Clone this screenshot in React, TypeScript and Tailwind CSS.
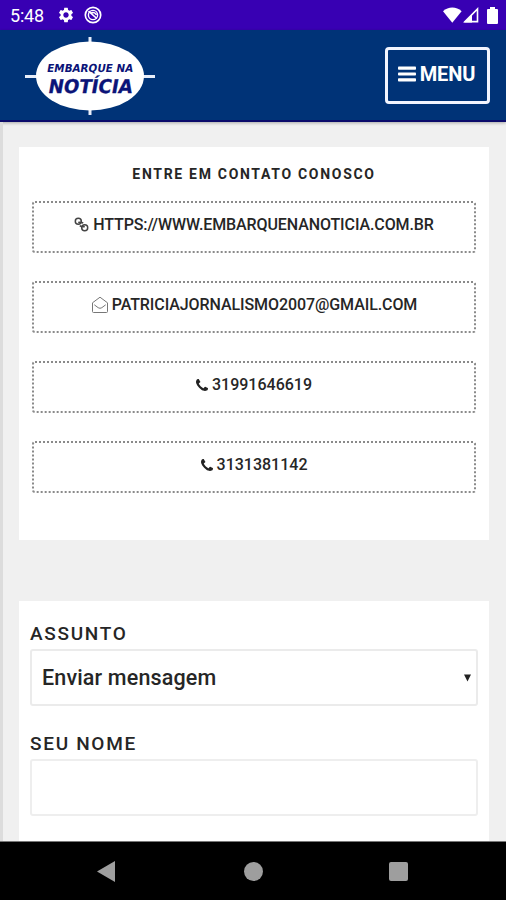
import type { ReactNode } from "react";
import { MdSettings } from "react-icons/md";

function StatusBar() {
  return (
    <div className="flex h-[30px] shrink-0 items-center bg-[#3800b3] pl-[10px] pr-2 text-white">
      <span className="w-[47px] pt-0.5 text-[18px] leading-none tracking-[-0.2px]">5:48</span>
      <MdSettings className="h-[18px] w-[18px]" />
      <svg viewBox="0 0 18 18" className="ml-[9px] h-[18px] w-[18px]" fill="none" stroke="currentColor">
        <circle cx="9" cy="9" r="7.7" strokeWidth="1.7" />
        <circle cx="9" cy="9" r="4.6" strokeWidth="1.4" />
        <path d="M4.5 5.200 12.800 12.500M7 7c2-.8 4.500-.2 5.500 1.800" strokeWidth="1.6" />
      </svg>
      <svg viewBox="0 0 19 17" className="ml-auto h-[17px] w-[19px]" fill="currentColor">
        <path d="M0 4.200C5.300-.6 13.400-.6 18.600 4.200L9.300 15.800Z" />
      </svg>
      <svg viewBox="0 0 16 16" className="ml-px h-4 w-4" fill="none" stroke="currentColor">
        <path d="M2 14.600 14.500 2v12.600Z" strokeWidth="1.600" />
        <path d="M1 15.400 9 7.400v8Z" fill="currentColor" stroke="none" />
      </svg>
      <svg viewBox="0 0 11 17" className="ml-2 h-[17px] w-[11px]" fill="currentColor">
        <path d="M3 0h5v2h2q1 0 1 1v13q0 1-1 1H1q-1 0-1-1V3q0-1 1-1h2Z" />
      </svg>
    </div>
  );
}

function Logo() {
  return (
    <svg viewBox="0 0 130 78" className="h-[78px] w-[130px]">
      <path d="M0 39.500h130M65 0v78" stroke="#e8eefa" strokeWidth="3" />
      <ellipse cx="65" cy="39" rx="54" ry="34.500" fill="#fff" />
      <g fill="#0b1478" fontFamily="'DejaVu Sans', sans-serif" fontWeight="bold">
        <text transform="translate(21.500 35) skewX(-10)" fontSize="11" textLength="86" lengthAdjust="spacingAndGlyphs">
          EMBARQUE NA
        </text>
        <text transform="translate(22.500 56) skewX(-10)" fontSize="19" textLength="84" lengthAdjust="spacingAndGlyphs" stroke="#0b1478" strokeWidth="0.3">
          NOTÍCIA
        </text>
      </g>
    </svg>
  );
}

function LinkIcon() {
  return (
    <svg viewBox="0 0 15 15" className="mr-1 h-[15px] w-[15px]" fill="none" stroke="#444" strokeWidth="1.5">
      <circle cx="4.300" cy="4.300" r="3" />
      <circle cx="10.700" cy="10.700" r="3" />
      <path d="M4.200 5.400q3.300-.6 5 .8M5.800 8.600q1.700 1.500 5 .9" />
    </svg>
  );
}

function MailIcon() {
  return (
    <svg viewBox="0 0 18 18" className="mr-[3px] h-[18px] w-[18px]" fill="none" stroke="#777" strokeWidth="1">
      <path d="M1.500 6.800 9 1.200l7.500 5.600V15.500q0 1-1 1h-13q-1 0-1-1Z" />
      <path d="m3.300 8.800 3.900 2.900q1.800 1.200 3.600 0l3.900-2.900" />
    </svg>
  );
}

function PhoneIcon() {
  return (
    <svg viewBox="0 0 1408 1408" className="mr-1 h-3 w-3" fill="#222">
      <path d="M1408 1112q0 27-10 70.500t-21 68.500q-21 50-122 106-94 51-186 51-27 0-52.500-3.500t-57.500-12.500-47.500-14.500-55.500-20.500-49-18q-98-35-175-83-128-79-264.500-215.500t-215.500-264.500q-48-77-83-175-3-9-18-49t-20.500-55.500-14.500-47.500-12.500-57.500-3.500-52.500q0-92 51-186 56-101 106-122 25-11 68.500-21t70.500-10q14 0 21 3 18 6 53 76 11 19 30 54t35 63.500 31 53.500q3 4 17.500 25t21.500 35.500 7 28.500q0 20-28.500 50t-62 55-62 53-28.500 46q0 9 5 22.500t8.500 20.500 14 24 11.500 19q76 137 174 235t235 174q2 1 19 11.500t24 14 20.500 8.500 22.500 5q18 0 46-28.500t53-62 55-62 50-28.500q14 0 28.500 7t35.500 21.500 25 17.500q25 15 53.500 31t63.500 35 54 30q70 35 76 53 3 7 3 21z" />
    </svg>
  );
}

const contatos: { icone: ReactNode; texto: string; espaco: string }[] = [
  { icone: <LinkIcon />, texto: "https://www.embarquenanoticia.com.br", espaco: "tracking-[-0.1px]" },
  { icone: <MailIcon />, texto: "patriciajornalismo2007@gmail.com", espaco: "tracking-[-0.08px]" },
  { icone: <PhoneIcon />, texto: "31991646619", espaco: "tracking-[0px]" },
  { icone: <PhoneIcon />, texto: "3131381142", espaco: "tracking-[0px]" },
];

export default function App() {
  return (
    <div className="flex h-[900px] w-[506px] flex-col overflow-hidden bg-[#f0f0f0] font-['Roboto',sans-serif] text-[#262626]">
      <StatusBar />
      <header className="flex h-[92px] shrink-0 items-start justify-between border-b-2 border-[#0b0b6b] bg-[#003377] pl-[25px] pr-4 shadow-[0_1px_3px_rgba(0,0,0,0.3)]">
        <div className="pt-[7px]">
          <Logo />
        </div>
        <button className="mt-[17px] flex h-[57px] w-[105px] items-center justify-center gap-1 rounded-[4px] border-[3px] border-[#f2f5ff] pb-1 pr-0.5 text-[20px] font-bold leading-none text-white">
          <svg viewBox="0 0 18 16" className="h-4 w-[18px]" fill="currentColor">
            <rect y="0.500" width="18" height="3.200" rx="0.800" />
            <rect y="6.400" width="18" height="3.200" rx="0.800" />
            <rect y="12.300" width="18" height="3.200" rx="0.800" />
          </svg>
          <span className="tracking-[-0.1px]">MENU</span>
        </button>
      </header>

      <main className="flex min-h-0 grow flex-col gap-[61px] overflow-hidden border-l-[3px] border-[#dcdcdc] pl-[16px] pr-[17px] pt-[25px]">
        <section className="h-[393px] shrink-0 bg-white px-[13px] pt-[18px]">
          <h2 className="text-center text-[14px] font-bold uppercase leading-[18px] tracking-[1.7px]">Entre em contato conosco</h2>
          <div className="mt-[18px] flex flex-col gap-7">
            {contatos.map((c) => (
              <a key={c.texto} className="flex h-[52px] items-center justify-center rounded-[3px] border-2 border-dotted border-[#8a8a8a] pb-[5px] text-base font-medium uppercase whitespace-nowrap">
                {c.icone}
                <span className={c.espaco}>{c.texto}</span>
              </a>
            ))}
          </div>
        </section>

        <section className="h-[260px] shrink-0 bg-white px-[11px] pt-[21px]">
          <label className="block text-[19px] font-medium uppercase leading-6 tracking-[1.7px]">Assunto</label>
          <div className="mt-[3px] flex h-[57px] items-center justify-between rounded-[3px] border-2 border-[#ebebeb] pl-[10px] pr-[5px]">
            <span className="text-[21.5px] font-medium leading-none tracking-[0.15px]">Enviar mensagem</span>
            <svg viewBox="0 0 7 8" className="h-2 w-[7px]">
              <path d="M0 .5h7L3.500 7.500Z" fill="#222" />
            </svg>
          </div>
          <label className="mt-[26px] block text-[19px] font-medium uppercase leading-6 tracking-[1.7px]">Seu nome</label>
          <div className="mt-[3px] h-[57px] rounded-[3px] border-2 border-[#eeeeee]" />
        </section>
      </main>

      <nav className="flex h-[59px] shrink-0 items-center border-t border-[#777] bg-black">
        <svg viewBox="0 0 18 21" className="ml-[97px] h-[21px] w-[18px]">
          <path d="M0 10.500 18 0v21Z" fill="#9e9e9e" />
        </svg>
        <div className="ml-[129px] h-[19px] w-[19px] rounded-full bg-[#9e9e9e]" />
        <div className="ml-[126px] h-[19px] w-[19px] rounded-[2px] bg-[#9e9e9e]" />
      </nav>
    </div>
  );
}
